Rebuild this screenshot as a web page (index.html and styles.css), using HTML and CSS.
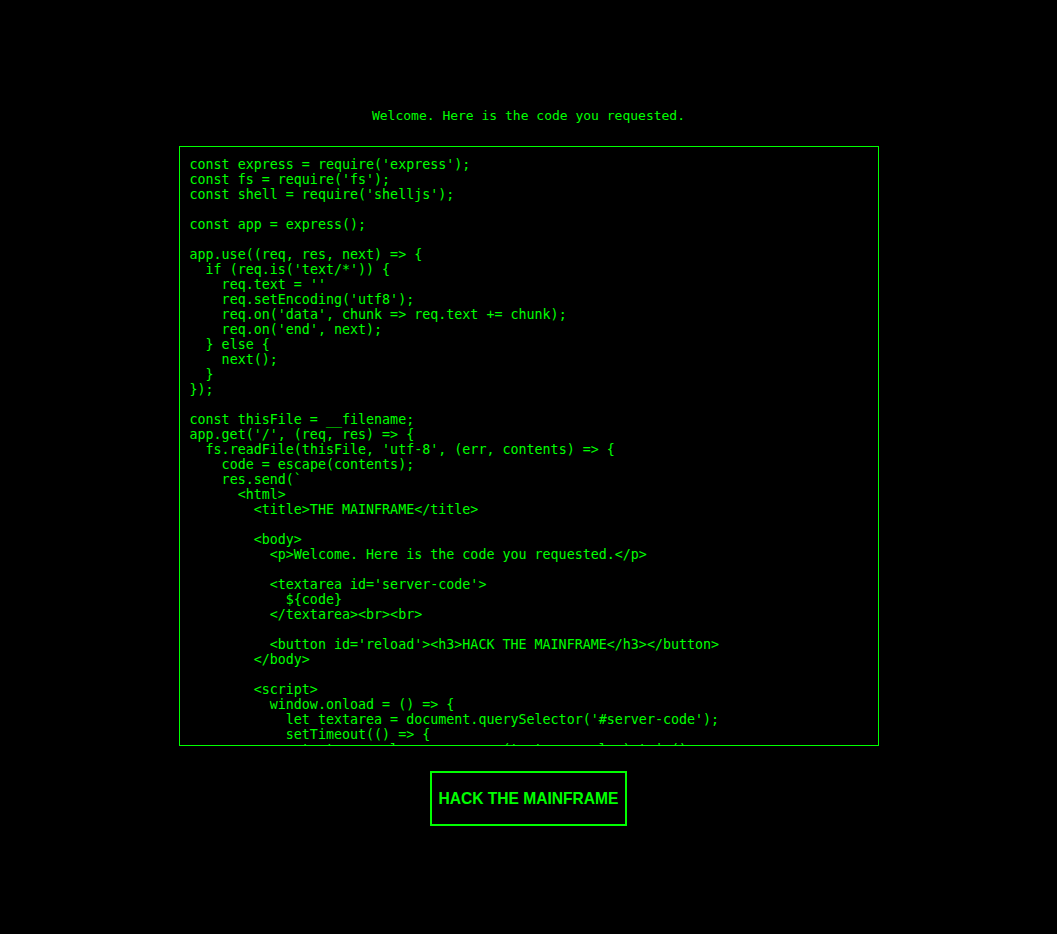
FILE: index.html
```html
<!DOCTYPE html>
<html lang="en">
<head>
    <meta charset="UTF-8">
    <meta name="viewport" content="width=device-width, initial-scale=1.0">
    <title>THE MAINFRAME</title>
    <link rel="stylesheet" href="styles.css">
</head>
<body>
    <main class="terminal">
        <p class="greeting">Welcome. Here is the code you requested.</p>

        <textarea id="server-code" class="code-box" spellcheck="false">
const express = require('express');
const fs = require('fs');
const shell = require('shelljs');

const app = express();

app.use((req, res, next) =&gt; {
  if (req.is('text/*')) {
    req.text = ''
    req.setEncoding('utf8');
    req.on('data', chunk =&gt; req.text += chunk);
    req.on('end', next);
  } else {
    next();
  }
});

const thisFile = __filename;
app.get('/', (req, res) =&gt; {
  fs.readFile(thisFile, 'utf-8', (err, contents) =&gt; {
    code = escape(contents);
    res.send(`
      &lt;html&gt;
        &lt;title&gt;THE MAINFRAME&lt;/title&gt;

        &lt;body&gt;
          &lt;p&gt;Welcome. Here is the code you requested.&lt;/p&gt;

          &lt;textarea id='server-code'&gt;
            ${code}
          &lt;/textarea&gt;&lt;br&gt;&lt;br&gt;

          &lt;button id='reload'&gt;&lt;h3&gt;HACK THE MAINFRAME&lt;/h3&gt;&lt;/button&gt;
        &lt;/body&gt;

        &lt;script&gt;
          window.onload = () =&gt; {
            let textarea = document.querySelector('#server-code');
            setTimeout(() =&gt; {
              textarea.value = unescape(textarea.value).trim();
            }, 0);
          };
        &lt;/script&gt;
      &lt;/html&gt;
    `);
  });
});
</textarea>

        <button id="reload" class="hack-btn"><h3>HACK THE MAINFRAME</h3></button>
    </main>
</body>
</html>
```

FILE: styles.css
```css
html, body {
    margin: 0;
    background: #000;
}
body {
    color: #00ff00;
    font-family: "DejaVu Sans Mono", "Liberation Mono", monospace;
    font-size: 13px;
}
.terminal {
    display: flex;
    flex-direction: column;
    align-items: center;
    padding-top: 108px;
}
.greeting {
    margin: 0 0 23px;
    line-height: 15px;
}
.code-box {
    box-sizing: border-box;
    width: 700px;
    height: 600px;
    margin: 0;
    padding: 10px;
    background: #000;
    color: #00ff00;
    border: 1px solid #00ff00;
    font-family: "DejaVu Sans Mono", "Liberation Mono", monospace;
    font-size: 13.333px;
    line-height: 15px;
    overflow: hidden;
    resize: none;
    outline: none;
}
.hack-btn {
    margin-top: 25px;
    padding: 1px 6px;
    background: #000;
    color: #00ff00;
    border: 2px solid #00ff00;
    font-family: "Liberation Sans", Arial, sans-serif;
    font-size: 13.333px;
    cursor: pointer;
}
.hack-btn h3 {
    margin: 1em 0;
    font-size: 1.17em;
    font-weight: bold;
}
```
